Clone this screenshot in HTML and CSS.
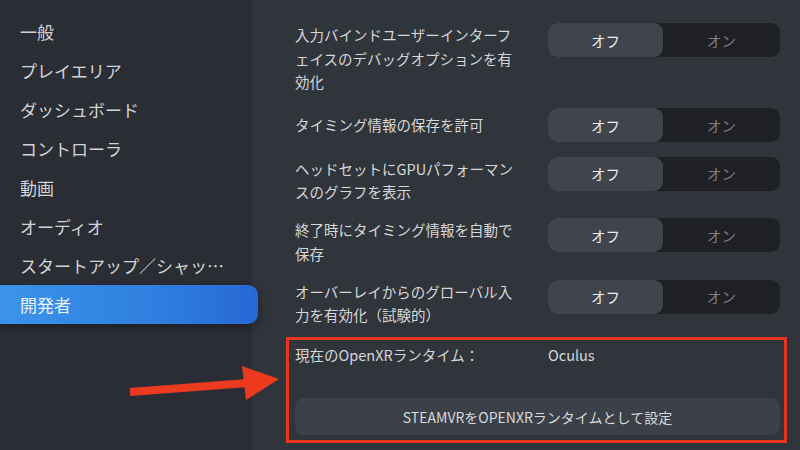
FILE: index.html
```html
<!DOCTYPE html>
<html lang="ja">
<head>
<meta charset="utf-8">
<link rel="stylesheet" href="styles.css">
</head>
<body>
<div class="app">
  <nav class="sidebar">
    <div class="nav-item">一般</div>
    <div class="nav-item">プレイエリア</div>
    <div class="nav-item">ダッシュボード</div>
    <div class="nav-item">コントローラ</div>
    <div class="nav-item">動画</div>
    <div class="nav-item">オーディオ</div>
    <div class="nav-item">スタートアップ／シャッ…</div>
    <div class="nav-item active">開発者</div>
  </nav>
  <main class="main">
    <div class="row">
      <div class="label">入力バインドユーザーインターフェイスのデバッグオプションを有効化</div>
      <div class="toggle"><span class="seg off">オフ</span><span class="seg on">オン</span></div>
    </div>
    <div class="row">
      <div class="label">タイミング情報の保存を許可</div>
      <div class="toggle"><span class="seg off">オフ</span><span class="seg on">オン</span></div>
    </div>
    <div class="row">
      <div class="label">ヘッドセットにGPUパフォーマンスのグラフを表示</div>
      <div class="toggle"><span class="seg off">オフ</span><span class="seg on">オン</span></div>
    </div>
    <div class="row">
      <div class="label">終了時にタイミング情報を自動で保存</div>
      <div class="toggle"><span class="seg off">オフ</span><span class="seg on">オン</span></div>
    </div>
    <div class="row last">
      <div class="label">オーバーレイからのグローバル入力を有効化（試験的）</div>
      <div class="toggle"><span class="seg off">オフ</span><span class="seg on">オン</span></div>
    </div>
    <div class="runtime-box">
      <div class="runtime-line">
        <span class="runtime-label">現在のOpenXRランタイム：</span>
        <span class="runtime-value">Oculus</span>
      </div>
      <button class="runtime-btn">STEAMVRをOPENXRランタイムとして設定</button>
    </div>
  </main>
  <svg class="arrow" width="160" height="50" viewBox="0 0 160 50">
    <line x1="2" y1="42" x2="120" y2="33" stroke="#ec3a1f" stroke-width="8" stroke-linecap="butt"/>
    <polygon points="114,16 151,29 118,50" fill="#ec3a1f"/>
  </svg>
</div>
</body>
</html>
```
FILE: styles.css
```css
* { box-sizing: border-box; }
html, body { margin: 0; padding: 0; }
body {
  width: 800px;
  height: 450px;
  overflow: hidden;
  background: #30343b;
  font-family: "Noto Sans CJK JP", "Noto Sans", sans-serif;
  color: #d6d7d9;
}
.app {
  position: relative;
  display: flex;
  width: 800px;
  height: 450px;
}
.sidebar {
  width: 252px;
  flex: none;
  background: #2a2d34;
  padding-top: 12px;
  position: relative;
  z-index: 1;
}
.nav-item {
  width: 258px;
  height: 39px;
  line-height: 39px;
  padding: 0 20px 0 20px;
  font-size: 17px;
  color: #d2d4d7;
  white-space: nowrap;
}
.nav-item.active {
  background: linear-gradient(90deg, #3b93ea 0%, #2f7fe0 60%, #2768d4 100%);
  color: #eef3fb;
  border-radius: 0 10px 10px 0;
  box-shadow: 0 3px 8px rgba(0,0,0,0.35);
}
.main {
  flex: 1;
  min-width: 0;
  padding: 23px 20px 0 43px;
  display: flex;
  flex-direction: column;
}
.row {
  display: flex;
  justify-content: space-between;
  align-items: flex-start;
  margin-bottom: 14.5px;
}
.row.last { margin-bottom: 10.5px; }
.label {
  width: 228px;
  min-height: 34px;
  display: flex;
  align-items: center;
  font-size: 14.5px;
  line-height: 23.5px;
  color: #d6d7d9;
}
.toggle {
  width: 232px;
  height: 34px;
  flex: none;
  display: flex;
  background: #1e2024;
  border-radius: 9px;
  overflow: hidden;
  font-size: 14.5px;
}
.seg {
  flex: 1;
  display: flex;
  align-items: center;
  justify-content: center;
}
.seg.off {
  flex: 0 0 115px;
  background: #3f444d;
  border-radius: 9px;
  color: #eceded;
}
.seg.on {
  color: #7c7f84;
}
.runtime-box {
  margin-left: -9px;
  width: 501px;
  height: 106px;
  border: 3px solid #e6361f;
  padding: 3px 4px 0 6px;
  display: flex;
  flex-direction: column;
}
.runtime-line {
  display: flex;
  font-size: 14.5px;
  line-height: 24px;
  color: #d6d7d9;
}
.runtime-label { width: 253px; }
.runtime-btn {
  margin-top: 31px;
  height: 37px;
  width: 485px;
  border: none;
  border-radius: 9px;
  background: #3c4049;
  color: #d8d9db;
  font-family: "Noto Sans CJK JP", "Noto Sans", sans-serif;
  font-size: 14px;
  padding: 0;
}
.arrow {
  position: absolute;
  left: 128px;
  top: 350px;
  z-index: 2;
}
```
